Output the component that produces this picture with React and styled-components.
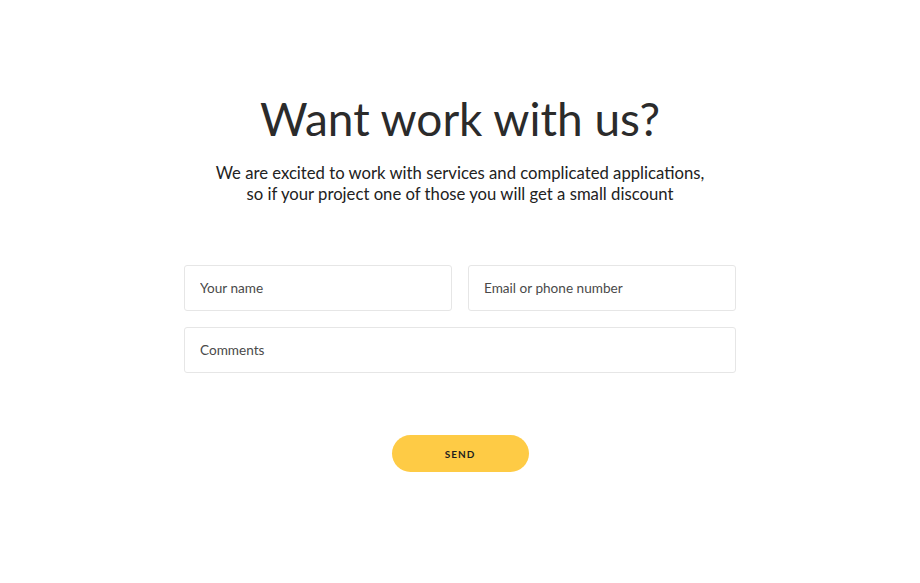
import React from "react";
import styled, { createGlobalStyle } from "styled-components";

const GlobalStyle = createGlobalStyle`
  body {
    margin: 0;
    background: #ffffff;
    font-family: Lato, "Open Sans", sans-serif;
    color: #2b2b2b;
  }
`;

const Page = styled.section`
  display: flex;
  flex-direction: column;
  align-items: center;
  padding-top: 88px;
`;

const Title = styled.h1`
  margin: 0;
  font-size: 46px;
  font-weight: 400;
  line-height: 62px;
  color: #2b2b2b;
`;

const Lead = styled.p`
  margin: 13px 0 0;
  font-size: 16.7px;
  line-height: 21px;
  text-align: center;
  color: #222;
`;

const Form = styled.form`
  margin-top: 60px;
  width: 552px;
  display: grid;
  grid-template-columns: 1fr 1fr;
  gap: 16px;
`;

const Field = styled.input`
  box-sizing: border-box;
  grid-column: ${(p) => (p.$wide ? "1 / -1" : "auto")};
  height: 46px;
  padding: 0 15px;
  border: 1px solid #e6e6e6;
  border-radius: 3px;
  font-family: Lato, sans-serif;
  font-size: 13.6px;
  color: #333;
  outline: none;
  &::placeholder {
    color: #4a4a4a;
  }
`;

const Send = styled.button`
  margin-top: 62px;
  width: 137px;
  height: 37px;
  border: none;
  border-radius: 19px;
  background: #fecb45;
  font-family: Lato, sans-serif;
  font-weight: 700;
  font-size: 10px;
  letter-spacing: 1px;
  color: #1e1e1e;
  cursor: pointer;
`;

const App = () => {
  return (
    <Page>
      <GlobalStyle />
      <Title>Want work with us?</Title>
      <Lead>
        We are excited to work with services and complicated applications,
        <br />
        so if your project one of those you will get a small discount
      </Lead>
      <Form onSubmit={(e) => e.preventDefault()}>
        <Field placeholder="Your name" />
        <Field placeholder="Email or phone number" />
        <Field $wide placeholder="Comments" />
      </Form>
      <Send type="button">SEND</Send>
    </Page>
  );
};

export default App;
